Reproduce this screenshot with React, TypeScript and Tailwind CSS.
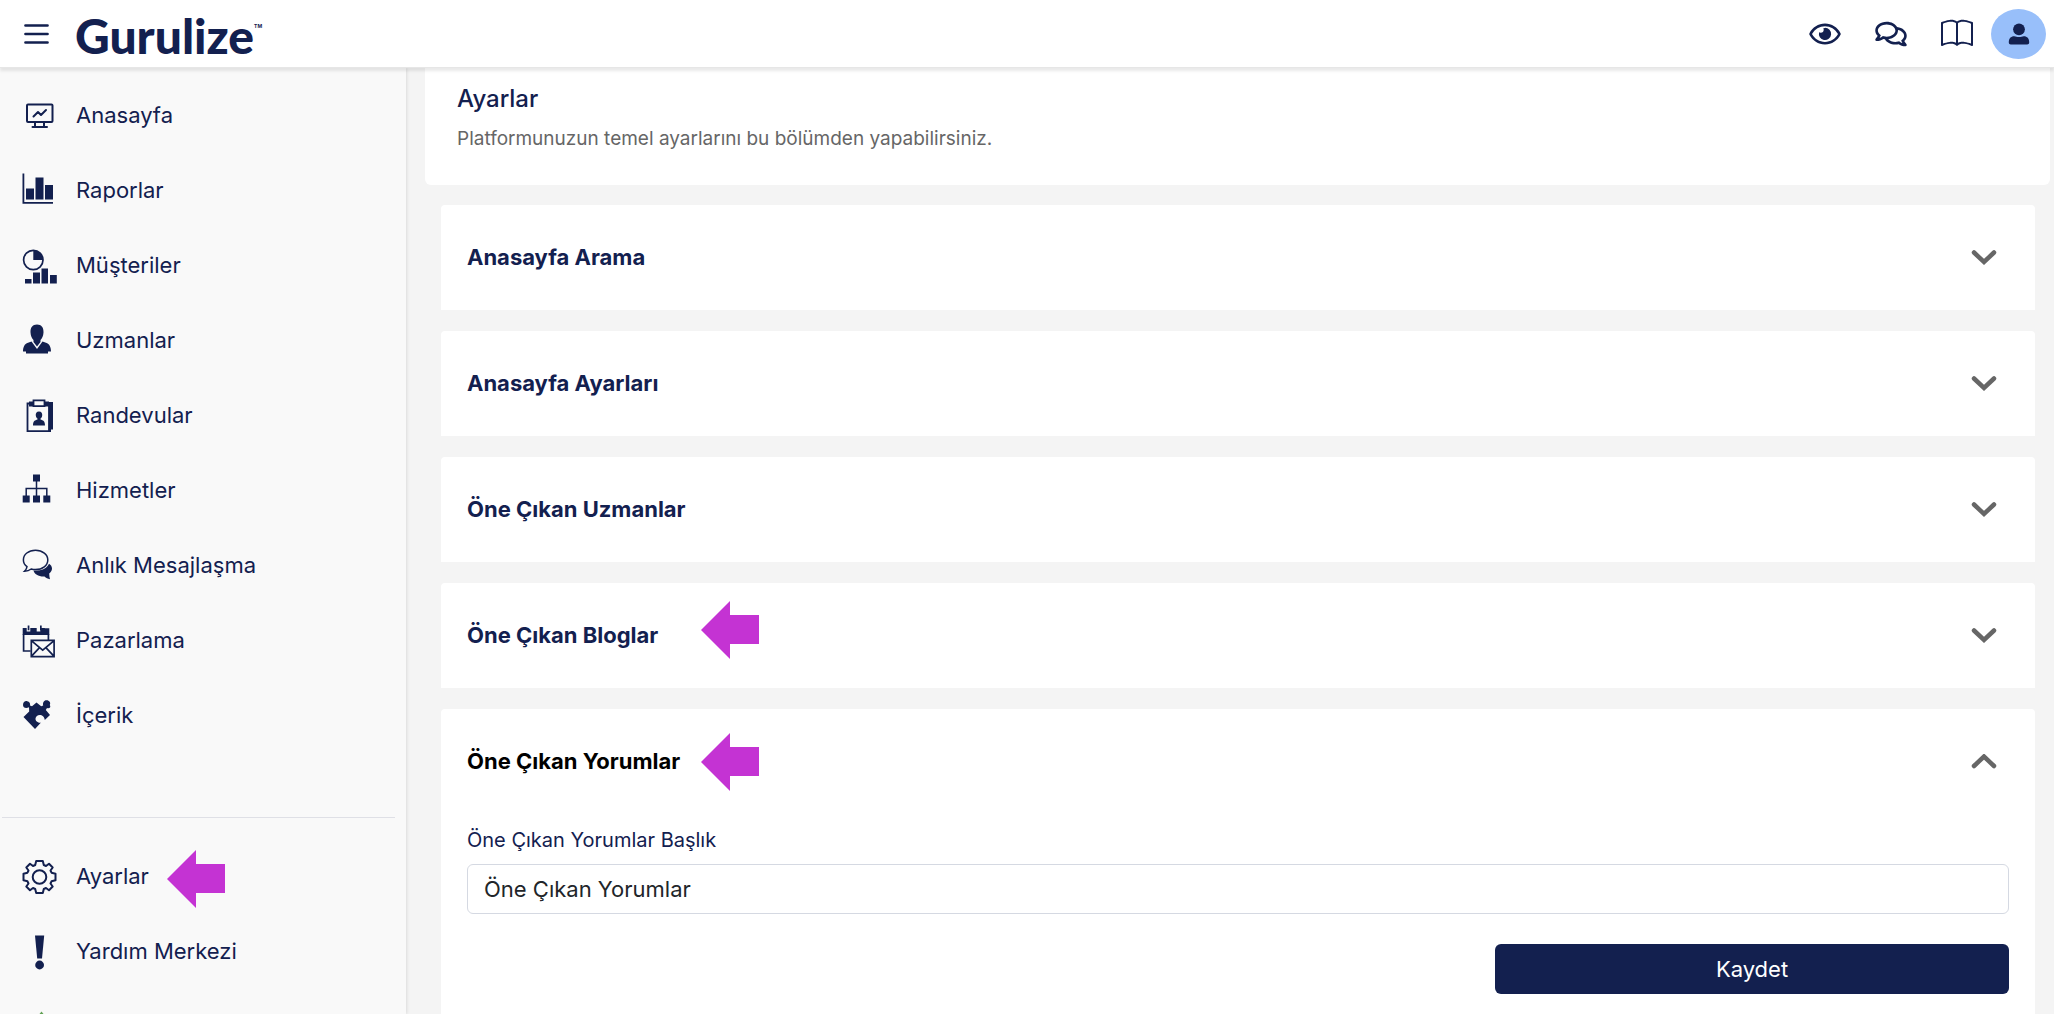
import { useState } from 'react'
import type { ReactNode } from 'react'
import { BsBook } from 'react-icons/bs'
import { FaRegComments, FaRegEye } from 'react-icons/fa'

type NavItem = {
  label: string
  icon: ReactNode
  marked?: boolean
}

const NavIcon = ({ children }: { children: ReactNode }) => (
  <svg
    viewBox="0 0 36 36"
    className="w-9 h-9 shrink-0"
    fill="currentColor"
    aria-hidden="true"
  >
    {children}
  </svg>
)

const Arrow = ({ className }: { className: string }) => (
  <svg
    viewBox="0 0 58 58"
    className={`absolute w-[58px] h-[58px] pointer-events-none ${className}`}
    aria-hidden="true"
  >
    <path d="M0 29 29 0v14h29v29H29v15z" fill="#c433d3" />
  </svg>
)

const mainItems: NavItem[] = [
  {
    label: 'Anasayfa',
    icon: (
      <NavIcon>
        <g fill="none" stroke="currentColor" strokeWidth="2" strokeLinejoin="round" strokeLinecap="round">
          <rect x="5" y="6.500" width="25.500" height="17.500" rx="1" />
          <path d="M13 24.500v4M22 24.500v4M10.500 29h14.500M11.500 18.500l4.500-4.500 3 3 5-5" />
        </g>
      </NavIcon>
    ),
  },
  {
    label: 'Raporlar',
    icon: (
      <NavIcon>
        <path d="M.5.500h1.800v28.500H31v1.700H.5zM4 15.500h8v11H4zM13.500 4.500h8v22h-8zM23 12h8v14.500h-8z" />
      </NavIcon>
    ),
  },
  {
    label: 'Müşteriler',
    icon: (
      <NavIcon>
        <circle cx="11.300" cy="12" r="9.700" fill="none" stroke="currentColor" strokeWidth="1.700" />
        <path d="M11.300 2.300a9.700 9.700 0 0 1 9.700 9.700h-9.700zM3 31h6.500v4.500H3zM11 24.500h7v11h-7zM19.500 20.500H26v15h-6.500zM28 27h6.800v8.500H28z" />
      </NavIcon>
    ),
  },
  {
    label: 'Uzmanlar',
    icon: (
      <NavIcon>
        <path d="M15 1.500c4.500 0 6.800 3 6.500 8-.2 3.500-1.500 6-3 7.500v2l-3.500 4.500-3.500-4.500v-2c-1.500-1.500-2.800-4-3-7.500-.3-5 2-8 6.500-8z" />
        <path d="M9.500 18.500l5.500 7.500 5.500-7.500 3.500 1.200c3.500 1 5 4.500 5 8.800h-3v2H4v-2H1c0-4.300 1.500-7.800 5-8.800z" />
      </NavIcon>
    ),
  },
  {
    label: 'Randevular',
    icon: (
      <NavIcon>
        <path d="M26 4h5v27.500h-2V34h-3z" />
        <path d="M5.500 5.500h21.500v27.700H5.500z" fill="#f9f9f9" stroke="currentColor" strokeWidth="1.800" />
        <path d="M7 3.500h20v5H7z" />
        <path d="M11.500 2.300h11v5.900h-11z" fill="#f9f9f9" stroke="currentColor" strokeWidth="1.800" />
        <path d="M17 13.500c2.500 0 3.500 1.700 3.200 4-.2 1.800-1 2.600-1.700 3.100v1c2.500.8 4.500 1.400 4.500 5.900H11c0-4.500 2-5.100 4.500-5.900v-1c-.7-.5-1.500-1.300-1.700-3.100-.3-2.300.7-4 3.200-4z" />
      </NavIcon>
    ),
  },
  {
    label: 'Hizmetler',
    icon: (
      <NavIcon>
        <path d="M11 1.500h7v7h-7zM.7 22.500h7v7h-7zM11 22.500h7v7h-7zM21.300 22.500h7v7h-7z" />
        <path d="M14.500 8v15M4.200 23v-7.500h20.600V23" fill="none" stroke="currentColor" strokeWidth="1.500" />
      </NavIcon>
    ),
  },
  {
    label: 'Anlık Mesajlaşma',
    icon: (
      <NavIcon>
        <path
          d="M13.500 2.300c7 0 12.300 4.100 12.300 9.600s-5.300 9.700-12.300 9.700c-1.600 0-3-.2-4.300-.6-1.900 1.500-4 2.200-6.700 2.300 1.500-1.500 2.300-3 2.500-4.700C2.600 16.900 1.400 14.500 1.400 11.900c0-5.500 5.100-9.600 12.100-9.600z"
          fill="none"
          stroke="currentColor"
          strokeWidth="1.500"
        />
        <path d="M27 15.700c1.900 1.200 3 2.800 3 4.800 0 2.100-1.200 3.900-2.800 5 .1 2 .3 3.800.8 5.700-2.300-.3-4-1.200-5.500-2.700-5.500.4-10.200-2.200-11-6 7 .5 13.500-1.700 15.500-6.800z" />
      </NavIcon>
    ),
  },
  {
    label: 'Pazarlama',
    icon: (
      <NavIcon>
        <path d="M.7 5h4v3.500h3.600V5h6.400v3.500h3.600V5h4.500v.2h4.500V12H.7zM5.700 2.500h1.700v4.800H5.700zM18 2.500h1.700v4.800H18z" />
        <path d="M1.600 11v17h7M26.400 11v6" fill="none" stroke="currentColor" strokeWidth="1.700" />
        <path
          d="M9.300 17.300h22.800v16.300H9.300zM9.300 17.700l11.400 9.500 11.400-9.500M9.300 33.300l8-8.500M32.100 33.300l-8-8.500"
          fill="none"
          stroke="currentColor"
          strokeWidth="1.700"
        />
      </NavIcon>
    ),
  },
  {
    label: 'İçerik',
    icon: (
      <NavIcon>
        <path d="M7 9.300C4 11 1 9.800 1 7c0-2.700 2-4.300 4.200-3.800C7.500 3.700 8.500 5 8 7.500l2 .7 4.500-3.700 4.700 3.700 2-.7c-.7-2.700.5-5.300 3.300-5.300 2.900 0 4.500 2.400 3.300 4.700C29.300 9 27.500 11 25 10l-1.200 2 4.200 5-5.200 5c-.2-2.300-1.500-4-3.300-4.800-2.800-1-5.800.6-6 3.300-.2 1.900 1 3.300 3 4 .8.300 1.800.2 2.500 0l-6 6.500L1.500 19l5.700-5.500z" />
      </NavIcon>
    ),
  },
]

const bottomItems: NavItem[] = [
  {
    label: 'Ayarlar',
    marked: true,
    icon: (
      <NavIcon>
        <g
          transform="translate(17.500 18)"
          fill="none"
          stroke="currentColor"
          strokeWidth="2"
          strokeLinejoin="round"
        >
          <path d="M-3.300-16h6.600L4.300-12l2.200 1L9.500-13.200 13.200-9.500 11-6.500l1 2.200L16-3.300v6.600L12 4.300l-1 2.200L13.200 9.500 9.500 13.200 6.500 11l-2.200 1L3.300 16h-6.600L-4.300 12l-2.200-1L-9.500 13.200-13.200 9.500-11 6.500l-1-2.200L-16 3.300v-6.600L-12-4.300l1-2.200L-13.200-9.500-9.500-13.200-6.500-11l2.200-1z" />
          <circle r="6.800" />
        </g>
      </NavIcon>
    ),
  },
  {
    label: 'Yardım Merkezi',
    icon: (
      <NavIcon>
        <path d="M13 1.500h9.200L20 24.500h-4.800z" />
        <circle cx="17.600" cy="31" r="4.400" />
      </NavIcon>
    ),
  },
]

const sections = [
  { title: 'Anasayfa Arama' },
  { title: 'Anasayfa Ayarları' },
  { title: 'Öne Çıkan Uzmanlar' },
  { title: 'Öne Çıkan Bloglar', arrow: 'left-[260px] top-[18px]' },
  { title: 'Öne Çıkan Yorumlar', arrow: 'left-[260px] top-[24px]' },
]

const Header = () => (
  <header className="relative z-10 h-[68px] shrink-0 bg-white flex items-center justify-between pl-6 pr-2 pt-px border-b border-[#e6e6e6] shadow-[0_3px_3px_rgba(0,0,0,0.09)]">
    <div className="flex items-center gap-[26px]">
      <button aria-label="Menü">
        <svg viewBox="0 0 25 22" className="w-[25px] h-[22px]" aria-hidden="true">
          <path d="M1.500 2.500h22M1.500 11h22M1.500 19.500h22" stroke="currentColor" strokeWidth="2.700" strokeLinecap="round" />
        </svg>
      </button>
      <a href="#" className="flex items-start leading-none pt-1">
        <span className="font-[Lato] font-black text-[48px]">Gurulize</span>
        <span className="text-[5px] font-bold mt-3">TM</span>
      </a>
    </div>
    <div className="flex items-center">
      <button className="w-8 mr-[34px]" aria-label="Önizle">
        <FaRegEye className="w-8 h-7" />
      </button>
      <button className="w-8 mr-[34px]" aria-label="Mesajlar">
        <FaRegComments className="w-8 h-7" />
      </button>
      <button className="w-8 mr-[18px]" aria-label="Rehber">
        <BsBook className="w-8 h-8" />
      </button>
      <button
        className="w-[55px] h-[50px] rounded-[50%] bg-[#98bffa] flex items-center justify-center"
        aria-label="Profil"
      >
        <svg viewBox="0 0 22 22" className="w-[22px] h-[22px]" fill="currentColor" aria-hidden="true">
          <circle cx="11" cy="6.300" r="5.900" />
          <path d="M.8 19.500c0-4 2-6.200 5.400-6.200 1.600 0 2.800.8 4.800.8s3.200-.8 4.800-.8c3.400 0 5.400 2.200 5.400 6.200 0 1.200-.8 2-2 2H2.800c-1.200 0-2-.8-2-2z" />
        </svg>
      </button>
    </div>
  </header>
)

const NavList = ({ items }: { items: NavItem[] }) => (
  <ul>
    {items.map((item) => (
      <li key={item.label} className="relative">
        <a href="#" className="h-[75px] pl-[22px] flex items-center gap-[18px] text-[22px]">
          {item.icon}
          {item.label}
        </a>
        {item.marked && <Arrow className="left-[167px] top-[11px]" />}
      </li>
    ))}
  </ul>
)

const Sidebar = () => (
  <aside className="relative z-[1] w-[406px] shrink-0 overflow-hidden bg-[#f9f9f9] shadow-[1px_0_3px_rgba(0,0,0,0.1)] pt-2.5">
    <nav>
      <NavList items={mainItems} />
      <hr className="mt-16 mb-[21px] ml-0.5 mr-[11px] border-[#dfe0e6]" />
      <NavList items={bottomItems} />
      {/* Status badge, sits at the fold */}
      <div className="pl-[22px] pt-5 text-[#5fa052]">
        <NavIcon>
          <path d="M19.500 2.500 32 18 19.500 33.500 7 18z" />
        </NavIcon>
      </div>
    </nav>
  </aside>
)

const Chevron = ({ open }: { open: boolean }) => (
  <svg viewBox="0 0 26 16" className="w-[26px] h-4" aria-hidden="true">
    <path
      d={open ? 'M3 12 13 2.500 23 12' : 'M3 2.500 13 12 23 2.500'}
      fill="none"
      stroke="#666"
      strokeWidth="4.500"
      strokeLinecap="round"
    />
  </svg>
)

const App = () => {
  const [openSection, setOpenSection] = useState('Öne Çıkan Yorumlar')

  return (
    <div className="h-screen pb-3.5 flex flex-col overflow-hidden bg-white text-[#13204f] font-[Inter,sans-serif]">
      <Header />
      <div className="flex flex-1 min-h-0 overflow-hidden">
        <Sidebar />
        <main className="flex-1 min-w-0 overflow-hidden bg-[#f4f4f4] pl-[19px] pr-1">
          {/* Page title */}
          <div className="h-[117px] bg-white rounded-b-md px-8 pt-[15px]">
            <h1 className="text-[24px] leading-8 font-medium">Ayarlar</h1>
            <p className="mt-2 text-[19px] leading-8 text-[#666]">
              Platformunuzun temel ayarlarını bu bölümden yapabilirsiniz.
            </p>
          </div>

          {/* Accordion */}
          <div className="mt-5 pl-4 pr-[15px] flex flex-col gap-[21px]">
            {sections.map(({ title, arrow }) => {
              const open = title === openSection
              return (
                <section key={title} className="relative bg-white rounded-t-sm">
                  <h2>
                    <button
                      className={`w-full h-[105px] px-[26px] flex items-center justify-between text-[22px] font-bold ${open ? 'text-black' : ''}`}
                      aria-expanded={open}
                      onClick={() => setOpenSection(open ? '' : title)}
                    >
                      {title}
                      <span className="mr-3">
                        <Chevron open={open} />
                      </span>
                    </button>
                  </h2>
                  {arrow && <Arrow className={arrow} />}
                  {open && (
                    <form className="px-[26px] pt-2.5 pb-8" onSubmit={(e) => e.preventDefault()}>
                      <label htmlFor="section-title" className="block text-[20px] leading-8">
                        {title} Başlık
                      </label>
                      <input
                        id="section-title"
                        defaultValue={title}
                        className="mt-2 w-full h-[50px] px-4 rounded-md border border-[#d5d9e2] bg-white text-[22px] text-[#212529]"
                      />
                      <div className="mt-[30px] flex justify-end">
                        <button className="w-1/3 h-[50px] rounded-md bg-[#13204f] text-white text-[22px]">
                          Kaydet
                        </button>
                      </div>
                    </form>
                  )}
                </section>
              )
            })}
          </div>
        </main>
      </div>
    </div>
  )
}

export default App
